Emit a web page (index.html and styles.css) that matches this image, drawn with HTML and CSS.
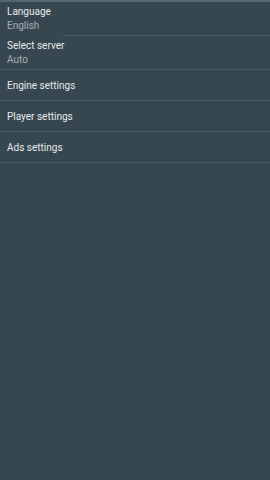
FILE: index.html
```html
<!DOCTYPE html>
<html>
<head>
    <title>Settings</title>
    <link rel="stylesheet" href="styles.css">
</head>
<body>
    <div class="topline"></div>
    <ul class="settings">
        <li class="item two-line first">
            <div class="title">Language</div>
            <div class="summary">English</div>
        </li>
        <li class="item two-line">
            <div class="title">Select server</div>
            <div class="summary">Auto</div>
        </li>
        <li class="item">
            <div class="title">Engine settings</div>
        </li>
        <li class="item">
            <div class="title">Player settings</div>
        </li>
        <li class="item">
            <div class="title">Ads settings</div>
        </li>
    </ul>
</body>
</html>
```
FILE: styles.css
```css
body {
    margin: 0;
    background-color: #37474f;
    font-family: Roboto, "Liberation Sans", sans-serif;
    height: 480px;
}

.topline {
    height: 2px;
    background-color: #56666d;
}

.settings {
    list-style: none;
    margin: 0;
    padding: 0;
}

.item {
    border-bottom: 1px solid #4a5a61;
    padding: 0 7px;
    height: 30px;
    display: flex;
    flex-direction: column;
    justify-content: center;
}

.two-line {
    height: 33px;
}

.first {
    border-image: linear-gradient(to right, #3b4b52 64px, #4a5a61 64px) 1;
}

.title {
    color: #e6eaec;
    font-size: 10px;
    line-height: 13px;
}

.summary {
    color: #a4b0b6;
    font-size: 10px;
    line-height: 13px;
    padding-top: 1px;
}
```
